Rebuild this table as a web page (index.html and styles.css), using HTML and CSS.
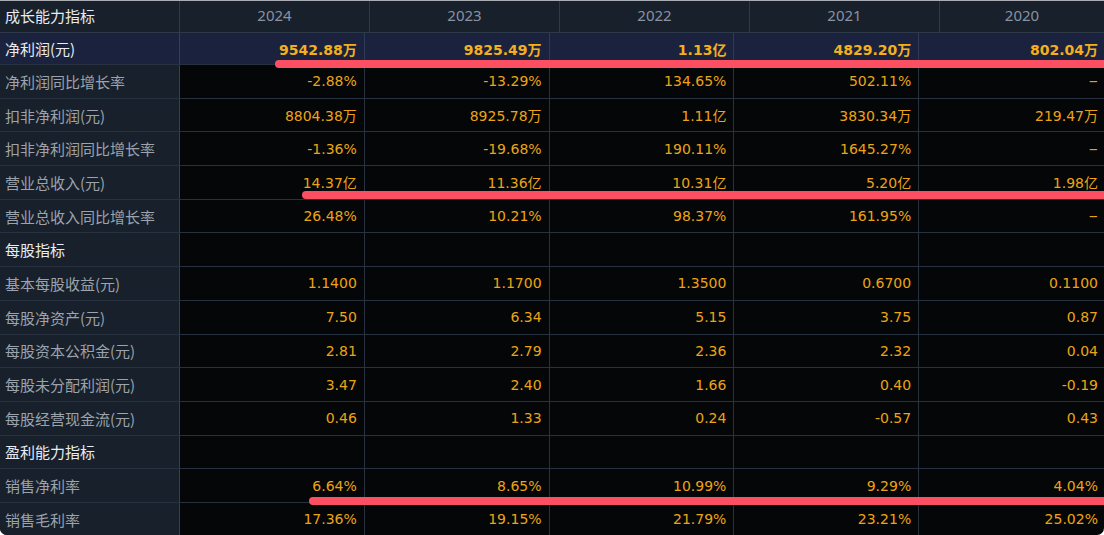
FILE: index.html
```html
<!DOCTYPE html>
<html lang="zh-CN">
<head>
<meta charset="utf-8">
<title>成长能力指标</title>
<link rel="stylesheet" href="styles.css">
</head>
<body>
<div class="panel">
  <div class="head">
    <div class="hcell hlabel">成长能力指标</div>
    <div class="hcell">2024</div>
    <div class="hcell">2023</div>
    <div class="hcell">2022</div>
    <div class="hcell">2021</div>
    <div class="hcell last">2020</div>
  </div>
  <div class="body">
    <div class="row first hl">
      <div class="lab strong">净利润(元)</div>
      <div class="val b">9542.88万</div><div class="val b">9825.49万</div><div class="val b">1.13亿</div><div class="val b">4829.20万</div><div class="val b">802.04万</div>
    </div>
    <div class="row">
      <div class="lab">净利润同比增长率</div>
      <div class="val">-2.88%</div><div class="val">-13.29%</div><div class="val">134.65%</div><div class="val">502.11%</div><div class="val dash">--</div>
    </div>
    <div class="row">
      <div class="lab">扣非净利润(元)</div>
      <div class="val">8804.38万</div><div class="val">8925.78万</div><div class="val">1.11亿</div><div class="val">3830.34万</div><div class="val">219.47万</div>
    </div>
    <div class="row">
      <div class="lab">扣非净利润同比增长率</div>
      <div class="val">-1.36%</div><div class="val">-19.68%</div><div class="val">190.11%</div><div class="val">1645.27%</div><div class="val dash">--</div>
    </div>
    <div class="row">
      <div class="lab">营业总收入(元)</div>
      <div class="val">14.37亿</div><div class="val">11.36亿</div><div class="val">10.31亿</div><div class="val">5.20亿</div><div class="val">1.98亿</div>
    </div>
    <div class="row">
      <div class="lab">营业总收入同比增长率</div>
      <div class="val">26.48%</div><div class="val">10.21%</div><div class="val">98.37%</div><div class="val">161.95%</div><div class="val dash">--</div>
    </div>
    <div class="row">
      <div class="lab strong">每股指标</div>
      <div class="val"></div><div class="val"></div><div class="val"></div><div class="val"></div><div class="val"></div>
    </div>
    <div class="row">
      <div class="lab">基本每股收益(元)</div>
      <div class="val">1.1400</div><div class="val">1.1700</div><div class="val">1.3500</div><div class="val">0.6700</div><div class="val">0.1100</div>
    </div>
    <div class="row">
      <div class="lab">每股净资产(元)</div>
      <div class="val">7.50</div><div class="val">6.34</div><div class="val">5.15</div><div class="val">3.75</div><div class="val">0.87</div>
    </div>
    <div class="row">
      <div class="lab">每股资本公积金(元)</div>
      <div class="val">2.81</div><div class="val">2.79</div><div class="val">2.36</div><div class="val">2.32</div><div class="val">0.04</div>
    </div>
    <div class="row">
      <div class="lab">每股未分配利润(元)</div>
      <div class="val">3.47</div><div class="val">2.40</div><div class="val">1.66</div><div class="val">0.40</div><div class="val">-0.19</div>
    </div>
    <div class="row">
      <div class="lab">每股经营现金流(元)</div>
      <div class="val">0.46</div><div class="val">1.33</div><div class="val">0.24</div><div class="val">-0.57</div><div class="val">0.43</div>
    </div>
    <div class="row">
      <div class="lab strong">盈利能力指标</div>
      <div class="val"></div><div class="val"></div><div class="val"></div><div class="val"></div><div class="val"></div>
    </div>
    <div class="row">
      <div class="lab">销售净利率</div>
      <div class="val">6.64%</div><div class="val">8.65%</div><div class="val">10.99%</div><div class="val">9.29%</div><div class="val">4.04%</div>
    </div>
    <div class="row">
      <div class="lab">销售毛利率</div>
      <div class="val">17.36%</div><div class="val">19.15%</div><div class="val">21.79%</div><div class="val">23.21%</div><div class="val">25.02%</div>
    </div>
  </div>
  <div class="mark mark1"></div>
  <div class="mark mark2"></div>
  <div class="mark mark3"></div>
</div>
</body>
</html>
```

FILE: styles.css
```css
html, body {
  margin: 0;
  padding: 0;
  background: #ffffff;
}
body {
  width: 1104px;
  height: 535px;
  overflow: hidden;
}
.panel {
  position: relative;
  width: 1104px;
  height: 535px;
  box-sizing: border-box;
  border-top: 1px solid #a9adb3;
  background: #050607;
  border-radius: 0 0 7px 7px;
  overflow: hidden;
  font-family: "Noto Sans CJK SC", "Noto Sans", sans-serif;
}
.head {
  display: grid;
  grid-template-columns: 180px 190px 190px 190px 190px 1fr;
  height: 31px;
  background: #18202b;
  border-bottom: 1px solid #2e394a;
}
.hcell {
  display: flex;
  align-items: center;
  justify-content: center;
  padding-bottom: 3px;
  box-sizing: border-box;
  border-right: 1px solid #2e394a;
  color: #8792a4;
  font-family: "Noto Sans", sans-serif;
  font-size: 15px;
}
.hcell.last { border-right: none; }
.hcell.hlabel {
  justify-content: flex-start;
  padding-left: 5px;
  padding-bottom: 2px;
  color: #e8ebef;
  font-family: "Noto Sans CJK SC", sans-serif;
  font-size: 15px;
}
.body {
  display: flex;
  flex-direction: column;
}
.row {
  display: grid;
  grid-template-columns: 180px repeat(5, 1fr);
  height: 33.7px;
  box-sizing: border-box;
  border-bottom: 1px solid #283140;
}
.row.first { height: 32px; }
.lab {
  display: flex;
  align-items: center;
  padding-left: 5px;
  background: #18202b;
  border-right: 1px solid #34405a;
  color: #9ca3ac;
  font-size: 15px;
  white-space: nowrap;
}
.lab.strong { color: #e9ecf0; }
.val {
  display: flex;
  align-items: center;
  justify-content: flex-end;
  padding-right: 7px;
  border-right: 1px solid #283140;
  color: #eca414;
  font-family: "DejaVu Sans", "Noto Sans CJK SC", sans-serif;
  font-size: 14px;
  white-space: nowrap;
}
.val:last-child { border-right: none; padding-right: 6px; }
.val.dash { letter-spacing: -1.5px; padding-right: 8px; }
.row.hl .lab,
.row.hl .val { background: #1a223e; }
.row.hl .val { border-right-color: #2e3a56; }
.val.b {
  font-weight: bold;
  color: #f4b01c;
}
.mark {
  position: absolute;
  right: -10px;
  height: 8px;
  border-radius: 4px;
  background: #fd4f62;
}
.mark1 { top: 59px; left: 275px; }
.mark2 { top: 190px; left: 302px; }
.mark3 { top: 496px; left: 309px; }
```
